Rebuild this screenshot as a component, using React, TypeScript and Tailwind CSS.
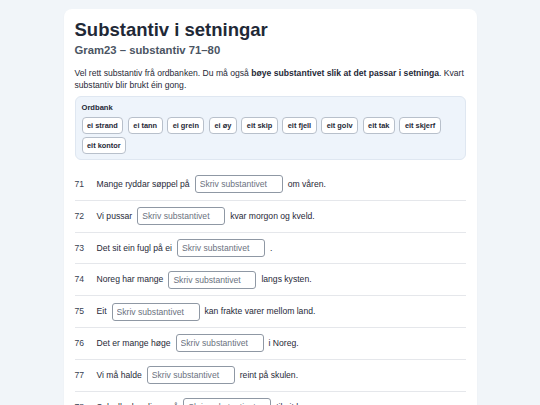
const words = [
  "ei strand",
  "ei tann",
  "ei grein",
  "ei øy",
  "eit skip",
  "eit fjell",
  "eit golv",
  "eit tak",
  "eit skjerf",
  "eit kontor",
];

const rows: { n: number; before: string; after: string }[] = [
  { n: 71, before: "Mange ryddar søppel på", after: "om våren." },
  { n: 72, before: "Vi pussar", after: "kvar morgon og kveld." },
  { n: 73, before: "Det sit ein fugl på ei", after: "." },
  { n: 74, before: "Noreg har mange", after: "langs kysten." },
  { n: 75, before: "Eit", after: "kan frakte varer mellom land." },
  { n: 76, before: "Det er mange høge", after: "i Noreg." },
  { n: 77, before: "Vi må halde", after: "reint på skulen." },
  { n: 78, before: "Solceller kan ligge på", after: "til eit hus." },
  { n: 79, before: "Ho har eit varmt", after: "rundt halsen." },
  { n: 80, before: "Mor arbeider på eit", after: "i byen." },
];

export default function App() {
  return (
    <div
      className="min-h-screen bg-[#f1f5f9] pt-[9px]"
      style={{ fontFamily: '"Liberation Sans", Arial, sans-serif' }}
    >
      <div className="mx-auto w-[413px] rounded-[8px] bg-white px-[11px] pt-[10px] pb-4 shadow-[0_1px_2px_rgba(0,0,0,0.04)]">
        <h1 className="text-[18.5px] font-bold leading-[22px] text-[#1f2937]">
          Substantiv i setningar
        </h1>
        <h2 className="mt-[2px] text-[11.3px] font-bold leading-[14px] text-[#4b5563]">
          Gram23 – substantiv 71–80
        </h2>
        <p className="mt-[10px] text-[8.6px] leading-[12px] text-[#1f2937]">
          Vel rett substantiv frå ordbanken. Du må også{" "}
          <b>bøye substantivet slik at det passar i setninga</b>. Kvart
          substantiv blir brukt éin gong.
        </p>

        <div className="mt-[5px] rounded-[6px] border border-[#dfe7f1] bg-[#eef4fb] px-[6px] pt-[5px] pb-[5px]">
          <div className="text-[7.6px] font-bold leading-[11px] text-[#1f2937]">
            Ordbank
          </div>
          <div className="mt-[3.5px] flex flex-wrap gap-x-[4.5px] gap-y-[3px]">
            {words.map((w) => (
              <span
                key={w}
                className="rounded-[4px] border border-[#b8c0cb] bg-white px-[4.5px] py-[3px] text-[7.4px] font-bold leading-[9px] text-[#1f2937]"
              >
                {w}
              </span>
            ))}
          </div>
        </div>

        <div className="mt-[9.5px]">
          {rows.map((r) => (
            <div
              key={r.n}
              className="flex h-[31.8px] items-center border-b border-[#e5e7eb] text-[8.6px] text-[#1f2937]"
            >
              <span className="w-[22px] shrink-0 text-[#374151]">{r.n}</span>
              <span>{r.before}</span>
              <input
                type="text"
                placeholder="Skriv substantivet"
                className="mx-[5px] h-[18px] w-[88px] rounded-[3px] border border-[#8f98a4] px-[4px] text-[8.6px] text-[#1f2937] placeholder:text-[#6b7280] outline-none"
              />
              <span>{r.after}</span>
            </div>
          ))}
        </div>
      </div>
    </div>
  );
}
